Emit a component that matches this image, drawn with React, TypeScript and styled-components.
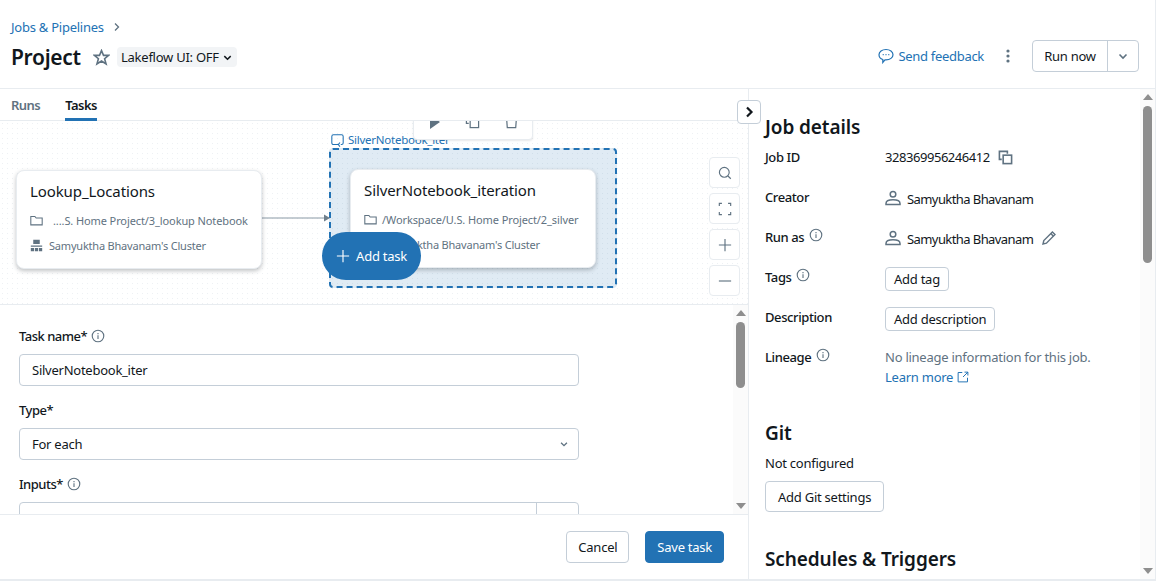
import React from "react";
import styled, { createGlobalStyle } from "styled-components";

const blue = "#2272b4";
const ink = "#11171c";
const muted = "#5f7281";
const line = "#e8ecf0";
const control = "#c4ced8";

const GlobalStyle = createGlobalStyle`
  html, body {
    margin: 0;
    padding: 0;
    height: 100%;
    background: #ffffff;
    overflow: hidden;
  }
  body {
    font-family: "Noto Sans", "Open Sans", sans-serif;
    font-size: 13px;
    letter-spacing: -0.25px;
    color: ${ink};
  }
  * { box-sizing: border-box; }
`;

const Page = styled.div`
  width: 1156px;
  height: 581px;
  display: flex;
  flex-direction: column;
  border-right: 1px solid ${line};
  border-bottom: 2px solid ${line};
  overflow: hidden;
`;

const Header = styled.header`
  height: 89px;
  flex: none;
  display: flex;
  justify-content: space-between;
  align-items: flex-end;
  padding: 0 16px 16px 11px;
  border-bottom: 1px solid ${line};
`;

const TitleBlock = styled.div`
  display: flex;
  flex-direction: column;
  gap: 6px;
`;

const Crumb = styled.div`
  display: flex;
  align-items: center;
  gap: 9px;
  height: 18px;
  color: ${blue};
  font-size: 13px;
`;

const TitleRow = styled.div`
  display: flex;
  align-items: center;
  height: 30px;
`;

const Title = styled.h1`
  margin: 0;
  width: 82px;
  font-size: 21px;
  line-height: 30px;
  font-weight: 600;
  letter-spacing: -0.3px;
`;

const Badge = styled.div`
  display: flex;
  align-items: center;
  gap: 3px;
  height: 20px;
  margin-left: 7px;
  padding: 0 4px;
  border-radius: 4px;
  background: #f2f4f6;
  font-size: 13px;
`;

const HeaderActions = styled.div`
  display: flex;
  align-items: center;
`;

const Feedback = styled.div`
  display: flex;
  align-items: center;
  gap: 4px;
  letter-spacing: -0.3px;
  color: ${blue};
`;

const Kebab = styled.div`
  width: 48px;
  display: flex;
  justify-content: center;
  color: ${muted};
`;

const SplitButton = styled.div`
  display: flex;
  height: 32px;
  width: 107px;
  border: 1px solid ${control};
  border-radius: 4px;
`;

const SplitMain = styled.div`
  width: 75px;
  display: flex;
  align-items: center;
  justify-content: center;
  border-right: 1px solid ${control};
`;

const SplitArrow = styled.div`
  flex: 1;
  display: flex;
  align-items: center;
  justify-content: center;
  color: ${muted};
`;

const Body = styled.div`
  flex: 1;
  min-height: 0;
  display: flex;
`;

const LeftColumn = styled.section`
  position: relative;
  width: 749px;
  flex: none;
  display: flex;
  flex-direction: column;
  border-right: 1px solid ${line};
`;

const Tabs = styled.nav`
  height: 32px;
  flex: none;
  display: flex;
  gap: 25px;
  padding-left: 11px;
  border-bottom: 1px solid ${line};
`;

const Tab = styled.div<{ $active?: boolean }>`
  height: 32px;
  padding-top: 7px;
  font-weight: 600;
  letter-spacing: -0.55px;
  color: ${(p) => (p.$active ? ink : muted)};
  border-bottom: ${(p) => (p.$active ? `3px solid ${blue}` : "none")};
`;

const Canvas = styled.div`
  position: relative;
  height: 184px;
  flex: none;
  overflow: hidden;
  border-bottom: 1px solid ${line};
  background-color: #ffffff;
  background-image: radial-gradient(#eef1f4 0.7px, transparent 0.8px);
  background-size: 5px 5px;
`;

const LoopBox = styled.div`
  position: absolute;
  left: 329px;
  top: 27px;
  width: 288px;
  height: 140px;
  border: 2px dashed ${blue};
  border-radius: 4px;
  background-color: rgba(34, 114, 180, 0.14);
`;

const LoopLabel = styled.div`
  position: absolute;
  left: 331px;
  top: 11px;
  display: flex;
  align-items: center;
  gap: 4px;
  font-size: 11.5px;
  line-height: 16px;
  color: ${blue};
`;

const NodeCard = styled.div<{ $x: number; $y: number }>`
  position: absolute;
  left: ${(p) => p.$x}px;
  top: ${(p) => p.$y}px;
  width: 246px;
  height: 99px;
  padding: 9px 13px;
  background: #ffffff;
  border: 1px solid ${line};
  border-radius: 8px;
  box-shadow: 0 2px 4px rgba(31, 39, 45, 0.28);
`;

const NodeTitle = styled.div`
  font-size: 15px;
  line-height: 22px;
  letter-spacing: -0.1px;
  margin-bottom: 6px;
`;

const NodeMeta = styled.div<{ $gap: number }>`
  display: flex;
  align-items: center;
  gap: ${(p) => p.$gap}px;
  height: 25px;
  font-size: 11px;
  letter-spacing: -0.1px;
  color: ${muted};
  white-space: nowrap;
`;

const ClusterMeta = styled(NodeMeta)`
  letter-spacing: -0.2px;
`;

const Edge = styled.svg`
  position: absolute;
  left: 262px;
  top: 91px;
`;

const NodeToolbar = styled.div`
  position: absolute;
  left: 413px;
  top: -10px;
  width: 120px;
  height: 29px;
  display: flex;
  align-items: flex-end;
  justify-content: space-between;
  padding: 0 13px 10px 15px;
  background: #ffffff;
  border: 1px solid ${line};
  border-radius: 4px;
  color: ${muted};
  box-shadow: 0 1px 2px rgba(31, 39, 45, 0.1);
`;

const AddTask = styled.div`
  position: absolute;
  left: 322px;
  top: 111px;
  width: 99px;
  height: 48px;
  display: flex;
  align-items: center;
  justify-content: center;
  gap: 6px;
  border-radius: 24px;
  background: ${blue};
  color: #ffffff;
`;

const ZoomStack = styled.div`
  position: absolute;
  left: 709px;
  top: 36px;
  display: flex;
  flex-direction: column;
  gap: 5px;
`;

const ZoomButton = styled.div`
  width: 31px;
  height: 31px;
  display: flex;
  align-items: center;
  justify-content: center;
  background: #ffffff;
  border: 1px solid ${line};
  border-radius: 4px;
  color: ${muted};
`;

const Collapse = styled.div`
  position: absolute;
  left: 737px;
  top: 11px;
  z-index: 2;
  width: 24px;
  height: 24px;
  display: flex;
  align-items: center;
  justify-content: center;
  background: #ffffff;
  border: 1px solid ${control};
  border-radius: 4px;
  color: ${ink};
`;

const FormArea = styled.div`
  flex: 1;
  min-height: 0;
  display: flex;
`;

const FormScroll = styled.div`
  flex: 1;
  min-width: 0;
  overflow: hidden;
  padding: 22px 0 0 19px;
`;

const Field = styled.div`
  width: 560px;
  margin-bottom: 15px;
`;

const FieldLabel = styled.label`
  display: flex;
  align-items: center;
  gap: 4px;
  height: 18px;
  margin-bottom: 9px;
  font-weight: 500;
  letter-spacing: -0.5px;
  color: ${ink};
`;

const InputBox = styled.div`
  position: relative;
  height: 32px;
  display: flex;
  align-items: center;
  justify-content: space-between;
  padding-left: 12px;
  border: 1px solid ${control};
  border-radius: 4px;
  white-space: nowrap;
`;

const InputsText = styled.span`
  padding: 2px 0 0 3px;
`;

const Chevron = styled.span`
  display: flex;
  width: 29px;
  justify-content: center;
  color: ${muted};
`;

const Braces = styled.span`
  width: 42px;
  height: 100%;
  display: flex;
  align-items: center;
  justify-content: center;
  padding-top: 1px;
  border-left: 1px solid ${control};
  font-size: 14px;
  font-weight: 700;
`;

const ScrollTrack = styled.div`
  width: 15px;
  flex: none;
  display: flex;
  flex-direction: column;
  align-items: center;
  justify-content: space-between;
  background: #fbfbfb;
  padding: 5px 0;
`;

const ScrollThumb = styled.div<{ $height: number }>`
  width: 9px;
  height: ${(p) => p.$height}px;
  margin-top: 6px;
  border-radius: 5px;
  background: #8e8e8e;
`;

const ScrollTop = styled.div`
  display: flex;
  flex-direction: column;
  align-items: center;
`;

const Arrow = styled.div<{ $up?: boolean }>`
  width: 0;
  height: 0;
  border-left: 5px solid transparent;
  border-right: 5px solid transparent;
  ${(p) =>
    p.$up
      ? "border-bottom: 6px solid #8e8e8e;"
      : "border-top: 6px solid #8e8e8e;"}
`;

const FormFooter = styled.footer`
  height: 65px;
  flex: none;
  display: flex;
  align-items: center;
  justify-content: flex-end;
  gap: 16px;
  padding: 0 24px 0 0;
  border-top: 1px solid ${line};
`;

const Button = styled.div<{ $primary?: boolean }>`
  height: 32px;
  display: flex;
  align-items: center;
  padding: 0 11px;
  border-radius: 4px;
  border: 1px solid ${(p) => (p.$primary ? blue : control)};
  background: ${(p) => (p.$primary ? blue : "#ffffff")};
  color: ${(p) => (p.$primary ? "#ffffff" : ink)};
  white-space: nowrap;
`;

const DetailsPanel = styled.aside`
  flex: 1;
  min-width: 0;
  display: flex;
`;

const DetailsContent = styled.div`
  flex: 1;
  min-width: 0;
  overflow: hidden;
  padding: 26px 0 0 16px;
`;

const SectionTitle = styled.h2<{ $gapTop?: number }>`
  margin: ${(p) => p.$gapTop ?? 0}px 0 0;
  font-size: 19px;
  line-height: 24px;
  font-weight: 600;
  letter-spacing: -0.1px;
`;

const DetailGrid = styled.div`
  display: grid;
  grid-template-columns: 120px 1fr;
  grid-auto-rows: 40px;
  margin-top: 9px;
`;

const DetailLabel = styled.div`
  display: flex;
  align-items: flex-start;
  gap: 5px;
  font-weight: 500;
  letter-spacing: -0.4px;
  line-height: 18px;
`;

const DetailValue = styled.div<{ $drop?: number }>`
  display: flex;
  align-items: flex-start;
  gap: 6px;
  margin-top: ${(p) => p.$drop ?? 0}px;
  line-height: 18px;
  height: 18px;
  white-space: nowrap;
`;

const UserName = styled.span`
  letter-spacing: -0.58px;
`;

const JobId = styled.span`
  letter-spacing: -0.45px;
`;

const SmallButton = styled.div`
  height: 24px;
  margin-top: -1px;
  display: flex;
  align-items: center;
  padding: 0 8px;
  border: 1px solid ${control};
  border-radius: 4px;
`;

const Hint = styled.div`
  line-height: 20px;
  color: ${muted};
`;

const LearnMore = styled.div`
  display: flex;
  align-items: center;
  gap: 4px;
  line-height: 20px;
  color: ${blue};
`;

const LineageBlock = styled.div`
  margin-top: -1px;
  white-space: nowrap;
`;

const GitText = styled.div`
  margin: 9px 0 9px;
  line-height: 18px;
`;

const GitButton = styled(Button)`
  display: inline-flex;
  height: 31px;
  padding: 0 12px;
`;

const Svg = styled.svg`
  flex: none;
  display: block;
`;

const Stroke = ({
  size = 16,
  weight = 1.3,
  children,
}: {
  size?: number;
  weight?: number;
  children: React.ReactNode;
}) => (
  <Svg width={size} height={size} viewBox="0 0 16 16" fill="none" stroke="currentColor" strokeWidth={weight}>
    {children}
  </Svg>
);

const IconTint = styled.span`
  display: flex;
  color: ${muted};
`;

const PencilTint = styled(IconTint)`
  margin-left: 2px;
`;

const Info = () => (
  <IconTint>
    <Stroke size={14}>
      <circle cx="8" cy="8" r="6.6" />
      <path d="M8 7.2v4.2" />
      <path d="M8 4.6v1.4" />
    </Stroke>
  </IconTint>
);

const UserIcon = () => (
  <IconTint>
    <Stroke weight={1.5}>
      <circle cx="8" cy="4.2" r="2.8" />
      <path d="M1 14.4v-1c0-2.4 3-3.6 7-3.6s7 1.2 7 3.6v1z" />
    </Stroke>
  </IconTint>
);

const FolderIcon = () => (
  <Stroke size={13}>
    <path d="M1 3h5l1.6 2H15v8.4H1z" />
  </Stroke>
);

const ClusterIcon = () => (
  <Svg width="13" height="13" viewBox="0 0 16 16" fill="currentColor">
    <path d="M4 1h8v5H4zM1 8h14v1.5H1zM1 11h4v4H1zM6 11h4v4H6zM11 11h4v4h-4z" />
  </Svg>
);

const CopyIcon = () => (
  <Stroke size={15} weight={1.7}>
    <path d="M10 4V1.5H1.5V10H4" />
    <rect x="5.5" y="5.5" width="9" height="9" />
  </Stroke>
);

const CopyDrop = styled(IconTint)`
  margin: 2px 0 0 2px;
`;

const DownChevron = ({ size = 12 }: { size?: number }) => (
  <Svg width={size} height={size} viewBox="0 0 12 12" fill="none" stroke="currentColor" strokeWidth="1.6">
    <path d="M2.5 4.5 6 8l3.5-3.5" />
  </Svg>
);

const App = () => {
  return (
    <>
      <GlobalStyle />
      <Page>
        <Header>
          <TitleBlock>
            <Crumb>
              Jobs &amp; Pipelines
              <IconTint>
                <Svg width="8" height="10" viewBox="0 0 8 10" fill="none" stroke="currentColor" strokeWidth="1.3">
                  <path d="M2 1.5 5.5 5 2 8.5" />
                </Svg>
              </IconTint>
            </Crumb>
            <TitleRow>
              <Title>Project</Title>
              <IconTint>
                <Stroke size={17} weight={1.5}>
                  <path d="M8 1.5 9.9 6h4.8l-3.8 3.1 1.4 4.9L8 11.3 3.7 14l1.4-4.9L1.3 6h4.8z" />
                </Stroke>
              </IconTint>
              <Badge>
                Lakeflow UI: OFF
                <DownChevron size={11} />
              </Badge>
            </TitleRow>
          </TitleBlock>
          <HeaderActions>
            <Feedback>
              <Stroke weight={1.2}>
                <path d="M8 1.5c4 0 7 2.3 7 5.2s-3 5.2-7 5.2H7l-2.2 2.6v-3C2.6 10.8 1 9 1 6.7 1 3.8 4 1.5 8 1.5z" />
                <path d="M4.7 6.7h1M7.5 6.7h1M10.3 6.7h1" />
              </Stroke>
              Send feedback
            </Feedback>
            <Kebab>
              <Svg width="4" height="14" viewBox="0 0 4 14" fill="currentColor">
                <circle cx="2" cy="2" r="1.6" />
                <circle cx="2" cy="7" r="1.6" />
                <circle cx="2" cy="12" r="1.6" />
              </Svg>
            </Kebab>
            <SplitButton>
              <SplitMain>Run now</SplitMain>
              <SplitArrow>
                <DownChevron />
              </SplitArrow>
            </SplitButton>
          </HeaderActions>
        </Header>

        <Body>
          <LeftColumn>
            <Collapse>
              <Svg width="12" height="12" viewBox="0 0 12 12" fill="none" stroke="currentColor" strokeWidth="2.2">
                <path d="M4 1.5 8.5 6 4 10.5" />
              </Svg>
            </Collapse>
            <Tabs>
              <Tab>Runs</Tab>
              <Tab $active>Tasks</Tab>
            </Tabs>
            <Canvas>
              <LoopBox />
              <LoopLabel>
                <Stroke size={13}>
                  <path d="M9 13H3a2 2 0 0 1-2-2V3a2 2 0 0 1 2-2h10a2 2 0 0 1 2 2v8a2 2 0 0 1-2 2h-1" />
                  <path d="M11 10.5 9 13l2 2.5" />
                </Stroke>
                SilverNotebook_iter
              </LoopLabel>
              <NodeToolbar>
                <Svg width="12" height="14" viewBox="0 0 12 14" fill="currentColor">
                  <path d="M1 0l10 7-10 7z" />
                </Svg>
                <Stroke size={15}>
                  <path d="M10 4V1.5H1.5V10H4" />
                  <rect x="5.5" y="5.5" width="9" height="9" />
                </Stroke>
                <Stroke size={15}>
                  <path d="M2.5 1l1 13.5h9l1-13.5" />
                </Stroke>
              </NodeToolbar>
              <Edge width="70" height="12" viewBox="0 0 70 12" fill="none">
                <path d="M0 6h64" stroke="#8a99a6" strokeWidth="1.2" />
                <path d="M62 2.5 68 6l-6 3.5z" fill="#6f7f8c" />
              </Edge>
              <NodeCard $x={16} $y={49}>
                <NodeTitle>Lookup_Locations</NodeTitle>
                <NodeMeta $gap={10}>
                  <FolderIcon />
                  ....S. Home Project/3_lookup Notebook
                </NodeMeta>
                <ClusterMeta $gap={6}>
                  <ClusterIcon />
                  Samyuktha Bhavanam's Cluster
                </ClusterMeta>
              </NodeCard>
              <NodeCard $x={350} $y={48}>
                <NodeTitle>SilverNotebook_iteration</NodeTitle>
                <NodeMeta $gap={5}>
                  <FolderIcon />
                  /Workspace/U.S. Home Project/2_silver
                </NodeMeta>
                <ClusterMeta $gap={6}>
                  <ClusterIcon />
                  Samyuktha Bhavanam's Cluster
                </ClusterMeta>
              </NodeCard>
              <AddTask>
                <Stroke size={14}>
                  <path d="M8 1v14M1 8h14" />
                </Stroke>
                Add task
              </AddTask>
              <ZoomStack>
                <ZoomButton>
                  <Stroke size={14}>
                    <circle cx="7.2" cy="7.2" r="5.6" />
                    <path d="M11.4 11.4 14.6 14.6" />
                  </Stroke>
                </ZoomButton>
                <ZoomButton>
                  <Stroke size={14}>
                    <path d="M1.5 4.5v-3h3M11.5 1.5h3v3M14.5 11.5v3h-3M4.5 14.5h-3v-3" />
                  </Stroke>
                </ZoomButton>
                <ZoomButton>
                  <Stroke size={14}>
                    <path d="M8 1v14M1 8h14" />
                  </Stroke>
                </ZoomButton>
                <ZoomButton>
                  <Stroke size={14}>
                    <path d="M1 8h14" />
                  </Stroke>
                </ZoomButton>
              </ZoomStack>
            </Canvas>

            <FormArea>
              <FormScroll>
                <Field>
                  <FieldLabel>
                    Task name*
                    <Info />
                  </FieldLabel>
                  <InputBox>SilverNotebook_iter</InputBox>
                </Field>
                <Field>
                  <FieldLabel>Type*</FieldLabel>
                  <InputBox>
                    For each
                    <Chevron>
                      <DownChevron size={10} />
                    </Chevron>
                  </InputBox>
                </Field>
                <Field>
                  <FieldLabel>
                    Inputs*
                    <Info />
                  </FieldLabel>
                  <InputBox>
                    <InputsText>{"{{tasks.Lookup_Locations.output.rows}}"}</InputsText>
                    <Braces>{"{ }"}</Braces>
                  </InputBox>
                </Field>
              </FormScroll>
              <ScrollTrack>
                <ScrollTop>
                  <Arrow $up />
                  <ScrollThumb $height={66} />
                </ScrollTop>
                <Arrow />
              </ScrollTrack>
            </FormArea>
            <FormFooter>
              <Button>Cancel</Button>
              <Button $primary>Save task</Button>
            </FormFooter>
          </LeftColumn>

          <DetailsPanel>
            <DetailsContent>
              <SectionTitle>Job details</SectionTitle>
              <DetailGrid>
                <DetailLabel>Job ID</DetailLabel>
                <DetailValue>
                  <JobId>328369956246412</JobId>
                  <CopyDrop>
                    <CopyIcon />
                  </CopyDrop>
                </DetailValue>
                <DetailLabel>Creator</DetailLabel>
                <DetailValue $drop={2}>
                  <UserIcon />
                  <UserName>Samyuktha Bhavanam</UserName>
                </DetailValue>
                <DetailLabel>
                  Run as
                  <Info />
                </DetailLabel>
                <DetailValue $drop={2}>
                  <UserIcon />
                  <UserName>Samyuktha Bhavanam</UserName>
                  <PencilTint>
                    <Stroke weight={1.4}>
                      <path d="M2 14l.8-3.4L11.4 2l2.6 2.6-8.6 8.6z" />
                      <path d="M9.8 3.6l2.6 2.6" />
                    </Stroke>
                  </PencilTint>
                </DetailValue>
                <DetailLabel>
                  Tags
                  <Info />
                </DetailLabel>
                <DetailValue>
                  <SmallButton>Add tag</SmallButton>
                </DetailValue>
                <DetailLabel>Description</DetailLabel>
                <DetailValue>
                  <SmallButton>Add description</SmallButton>
                </DetailValue>
                <DetailLabel>
                  Lineage
                  <Info />
                </DetailLabel>
                <LineageBlock>
                  <Hint>No lineage information for this job.</Hint>
                  <LearnMore>
                    Learn more
                    <Stroke size={12}>
                      <path d="M7 2H1.5v12.5H14V9" />
                      <path d="M8 8l6.5-6.5M10 1.5h4.5V6" />
                    </Stroke>
                  </LearnMore>
                </LineageBlock>
              </DetailGrid>
              <SectionTitle $gapTop={33}>Git</SectionTitle>
              <GitText>Not configured</GitText>
              <GitButton>Add Git settings</GitButton>
              <SectionTitle $gapTop={35}>Schedules &amp; Triggers</SectionTitle>
            </DetailsContent>
            <ScrollTrack>
              <ScrollTop>
                <Arrow $up />
                <ScrollThumb $height={157} />
              </ScrollTop>
              <Arrow />
            </ScrollTrack>
          </DetailsPanel>
        </Body>
      </Page>
    </>
  );
};

export default App;
